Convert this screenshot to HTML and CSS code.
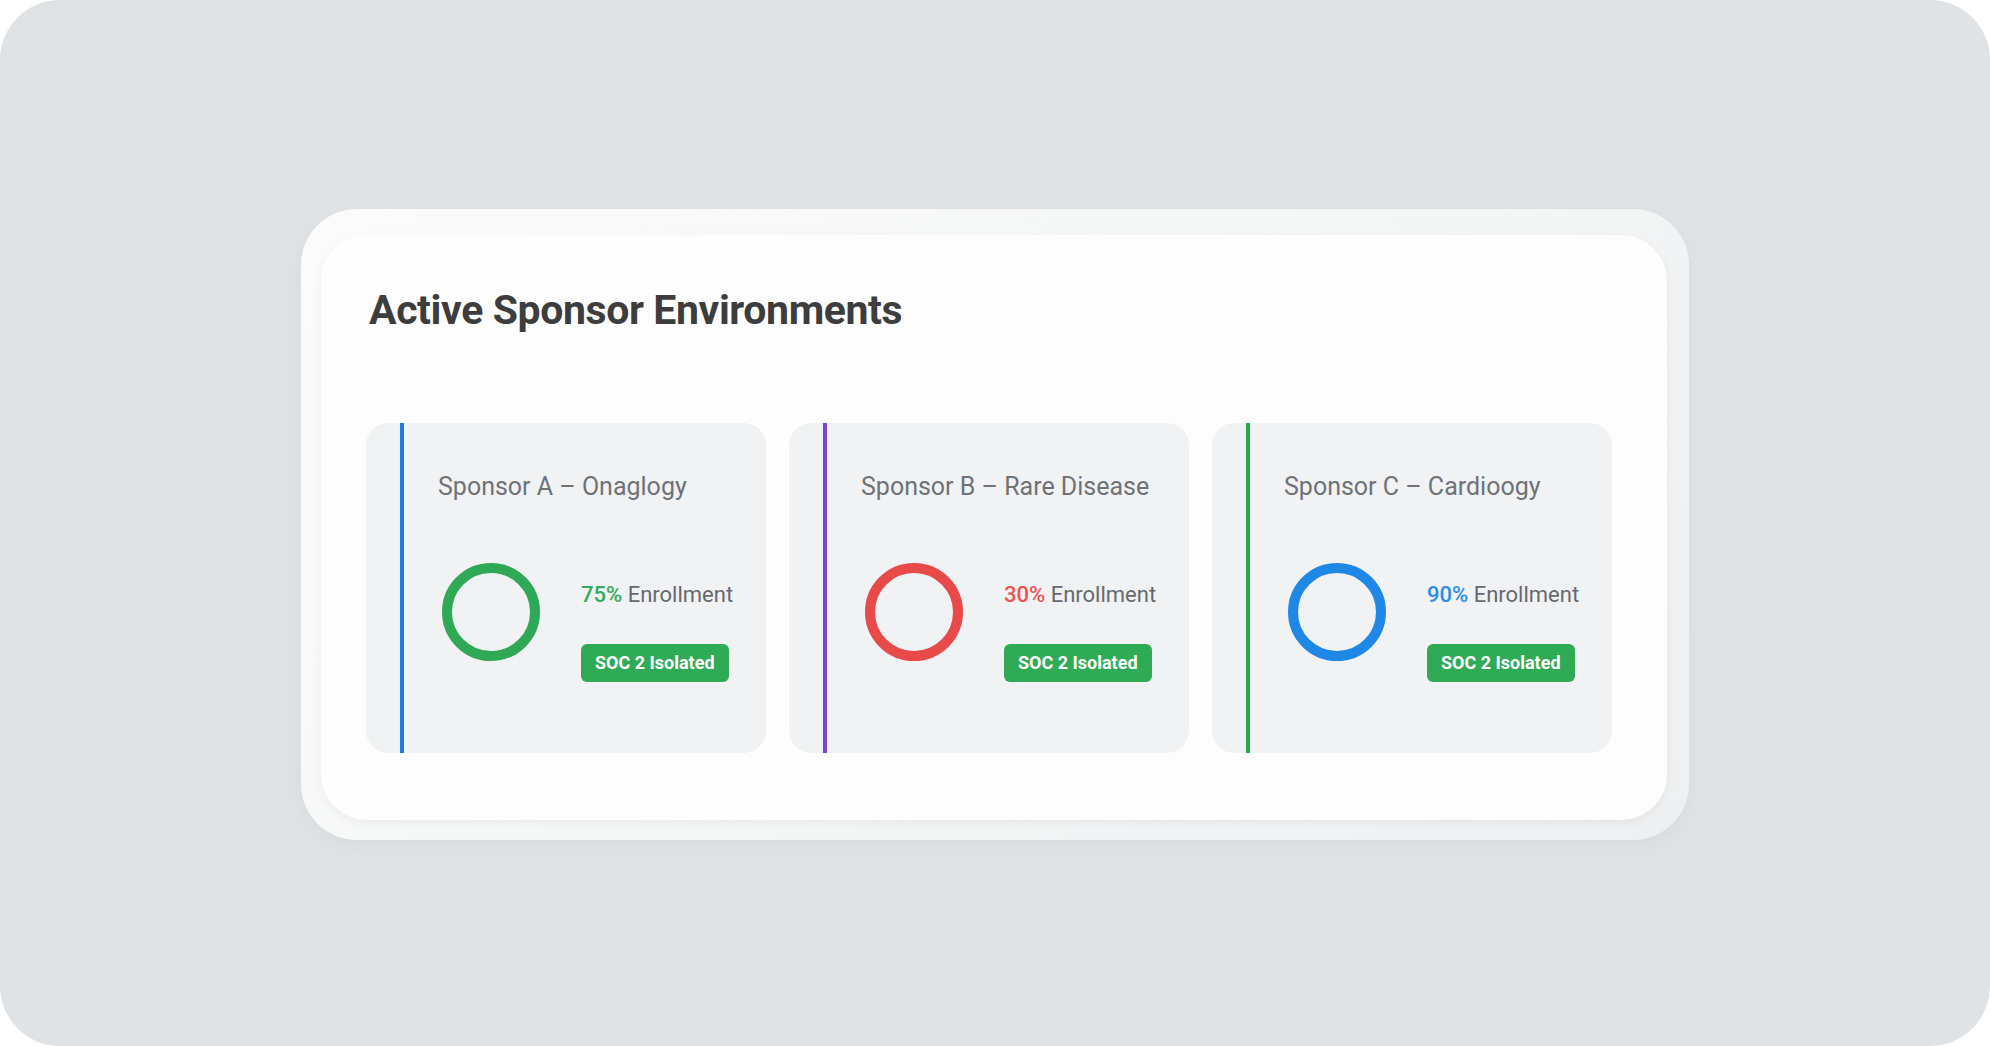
FILE: index.html
```html
<!DOCTYPE html>
<html lang="en">
<head>
  <meta charset="UTF-8" />
  <meta name="viewport" content="width=device-width, initial-scale=1.0" />
  <title>Active Sponsor Environments</title>
  <link rel="stylesheet" href="styles.css">
</head>
<body>

  <div class="frame">
    <div class="shell">
      <div class="panel">
        <h1>Active Sponsor Environments</h1>

        <div class="sponsors">
          <div class="sponsor">
            <div class="sponsor-body stripe-blue">
              <h2>Sponsor A – Onaglogy</h2>
              <div class="stats">
                <div class="ring ring-green"></div>
                <div class="info">
                  <p class="enroll"><span class="pct green">75%</span> Enrollment</p>
                  <span class="badge">SOC 2 Isolated</span>
                </div>
              </div>
            </div>
          </div>

          <div class="sponsor">
            <div class="sponsor-body stripe-purple">
              <h2>Sponsor B – Rare Disease</h2>
              <div class="stats">
                <div class="ring ring-red"></div>
                <div class="info">
                  <p class="enroll"><span class="pct red">30%</span> Enrollment</p>
                  <span class="badge">SOC 2 Isolated</span>
                </div>
              </div>
            </div>
          </div>

          <div class="sponsor">
            <div class="sponsor-body stripe-green">
              <h2>Sponsor C – Cardioogy</h2>
              <div class="stats">
                <div class="ring ring-blue"></div>
                <div class="info">
                  <p class="enroll"><span class="pct blue">90%</span> Enrollment</p>
                  <span class="badge">SOC 2 Isolated</span>
                </div>
              </div>
            </div>
          </div>
        </div>
      </div>
    </div>
  </div>

</body>
</html>
```

FILE: styles.css
```css
html, body {
  margin: 0;
  height: 100%;
  background: #fff;
}

body {
  font-family: Roboto, "Liberation Sans", sans-serif;
}

.frame {
  height: 100%;
  box-sizing: border-box;
  padding-top: 3px;
  background: #dfe3e6;
  border-radius: 60px;
  display: flex;
  align-items: center;
  justify-content: center;
}

.shell {
  width: 1388px;
  padding: 26px 22px 20px 20px;
  box-sizing: border-box;
  background: linear-gradient(135deg, #fbfbfb 0%, #f5f6f6 50%, #eeeff0 100%);
  border-radius: 56px;
  box-shadow: 0 6px 24px rgba(0, 0, 0, 0.04);
}

.panel {
  background: #fdfdfd;
  border-radius: 46px;
  padding: 50px 55px 67px 45px;
  box-shadow: 0 3px 10px rgba(0, 0, 0, 0.05);
}

h1 {
  margin: 0 0 88px 3px;
  font-size: 41px;
  line-height: 50px;
  font-weight: 700;
  letter-spacing: -0.4px;
  color: #3d3d3d;
}

.sponsors {
  display: grid;
  grid-template-columns: repeat(3, 1fr);
  gap: 23px;
}

.sponsor {
  height: 330px;
  background: #f1f2f4;
  border-radius: 22px;
  padding-left: 34px;
  display: flex;
}

.sponsor-body {
  flex: 1;
  padding: 49px 0 0 34px;
  border-left: 4px solid;
}

.stripe-blue { border-color: #1f7ae0; }
.stripe-purple { border-color: #7d43d3; }
.stripe-green { border-color: #2aa64f; }

h2 {
  margin: 0;
  font-size: 25px;
  line-height: 30px;
  font-weight: 400;
  color: #6f7277;
}

.stats {
  display: flex;
  margin-top: 61px;
  padding-left: 4px;
}

.ring {
  width: 98px;
  height: 98px;
  box-sizing: border-box;
  border-radius: 50%;
  border: 10px solid;
}

.ring-green { border-color: #2fa956; }
.ring-red { border-color: #e84a4a; }
.ring-blue { border-color: #1f88e6; }

.info {
  margin: 19px 0 0 41px;
}

.enroll {
  margin: 0 0 37px;
  font-size: 22px;
  line-height: 25px;
  color: #66696e;
}

.pct { font-weight: 500; }
.green { color: #34ab5b; }
.red { color: #ec5252; }
.blue { color: #2a8de8; }

.badge {
  display: inline-block;
  padding: 0 14px;
  height: 38px;
  line-height: 38px;
  border-radius: 6px;
  background: #2faa55;
  color: #fff;
  font-size: 18px;
  font-weight: 700;
}
```
